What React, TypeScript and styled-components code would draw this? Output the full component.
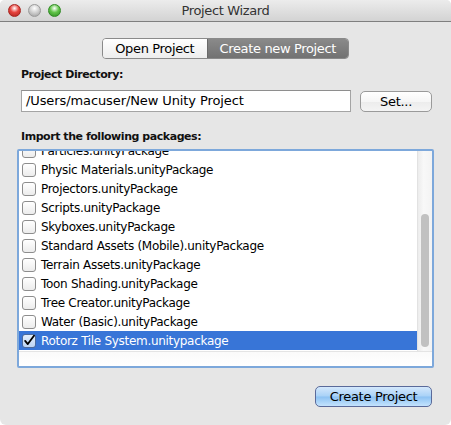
import React from "react";
import styled, { createGlobalStyle } from "styled-components";

const GlobalStyle = createGlobalStyle`
  html, body { margin: 0; padding: 0; background: #ffffff; }
  body { font-family: "DejaVu Sans", "Liberation Sans", sans-serif; }
  * { box-sizing: border-box; }
`;

const Window = styled.div`
  width: 451px;
  height: 425px;
  background: #e6e6e6;
  border-radius: 5px 5px 6px 6px;
  overflow: hidden;
  display: flex;
  flex-direction: column;
  color: #000;
`;

const TitleBar = styled.div`
  height: 22px;
  flex: none;
  display: grid;
  grid-template-columns: 70px 1fr 70px;
  align-items: center;
  background: linear-gradient(#ececec, #d3d3d3);
  border-bottom: 1px solid #7f7f7f;
`;

const Lights = styled.div`
  display: flex;
  gap: 7px;
  padding-left: 8px;
  align-items: center;
`;

const Light = styled.span<{ $c: string; $d: string }>`
  width: 13px;
  height: 13px;
  border-radius: 50%;
  background: radial-gradient(circle at 50% 30%, #ffffff 0%, ${(p) => p.$c} 45%, ${(p) => p.$d} 100%);
  border: 1px solid ${(p) => p.$d};
`;

const Title = styled.div`
  text-align: center;
  font-size: 13px;
  letter-spacing: -0.35px;
  color: #333;
  line-height: 21px;
`;

const Body = styled.div`
  flex: 1;
  display: flex;
  flex-direction: column;
  padding: 0 17px;
`;

const TabRow = styled.div`
  display: flex;
  align-items: center;
  margin: 16px -17px 0;
`;

const TabLine = styled.div`
  flex: 1;
  height: 1px;
  background: #a8a8a8;
`;

const Segmented = styled.div`
  display: flex;
  height: 21px;
  border: 1px solid #8a8a8a;
  border-radius: 4px;
  overflow: hidden;
  margin-left: 102px;
  margin-right: 102px;
`;

const Segment = styled.div<{ $active?: boolean }>`
  display: flex;
  align-items: center;
  justify-content: center;
  font-size: 13px;
  letter-spacing: -0.35px;
  width: ${(p) => (p.$active ? "142px" : "104px")};
  color: ${(p) => (p.$active ? "#ffffff" : "#000000")};
  background: ${(p) =>
    p.$active ? "linear-gradient(#8a8a8a, #727272)" : "linear-gradient(#ffffff, #ededed)"};
  border-left: ${(p) => (p.$active ? "1px solid #6a6a6a" : "none")};
`;

const Label = styled.div<{ $top: number }>`
  font-weight: bold;
  font-size: 11px;
  letter-spacing: -0.45px;
  line-height: 14px;
  margin: ${(p) => p.$top}px 0 0 4px;
  color: #111;
`;

const FieldRow = styled.div`
  display: flex;
  align-items: center;
  gap: 9px;
  margin: 8px 2px 0 4px;
`;

const TextField = styled.div`
  flex: 1;
  height: 22px;
  background: #ffffff;
  border: 1px solid #a4a4a4;
  border-top-color: #8e8e8e;
  padding-left: 4px;
  font-size: 13px;
  letter-spacing: -0.1px;
  line-height: 20px;
  color: #000;
`;

const PushButton = styled.div<{ $w: number; $primary?: boolean }>`
  width: ${(p) => p.$w}px;
  height: 21px;
  border-radius: 5px;
  border: 1px solid ${(p) => (p.$primary ? "#5a6a9a" : "#9a9a9a")};
  background: ${(p) =>
    p.$primary
      ? "linear-gradient(#d4e8fc 0%, #a9d2f7 48%, #8cc2f3 52%, #c4e3fd 100%)"
      : "linear-gradient(#ffffff 0%, #f6f6f6 50%, #ececec 52%, #f4f4f4 100%)"};
  display: flex;
  align-items: center;
  justify-content: center;
  font-size: 13px;
  letter-spacing: -0.3px;
  color: #000;
  flex: none;
`;

const ListFrame = styled.div`
  margin-top: 5px;
  height: 219px;
  border: 2px solid #7da8db;
  border-radius: 2px;
  background: #ffffff;
  display: grid;
  grid-template-columns: 1fr 15px;
  grid-template-rows: 200px 1fr;
`;

const Viewport = styled.div`
  overflow: hidden;
  position: relative;
`;

const Rows = styled.div<{ $scroll: number }>`
  margin-top: ${(p) => -p.$scroll}px;
  display: flex;
  flex-direction: column;
`;

const Row = styled.div<{ $selected?: boolean }>`
  height: 19px;
  display: flex;
  align-items: center;
  gap: 5px;
  padding-left: 3px;
  font-size: 12px;
  letter-spacing: -0.3px;
  white-space: nowrap;
  background: ${(p) => (p.$selected ? "#3875d7" : "transparent")};
  color: ${(p) => (p.$selected ? "#ffffff" : "#000000")};
`;

const Box = styled.span<{ $checked?: boolean }>`
  width: 14px;
  height: 14px;
  flex: none;
  border-radius: 3px;
  border: 1px solid ${(p) => (p.$checked ? "#4d6b9c" : "#8d8d8d")};
  background: ${(p) =>
    p.$checked ? "linear-gradient(#e3eefc, #bcd4f4)" : "linear-gradient(#ffffff, #ececec)"};
  display: flex;
  align-items: center;
  justify-content: center;
`;

const ScrollTrack = styled.div`
  background: linear-gradient(90deg, #ececec, #f8f8f8 40%, #f3f3f3);
  border-left: 1px solid #e2e2e2;
  padding: 63px 0 0 3px;
`;

const Thumb = styled.div`
  width: 8px;
  height: 133px;
  border-radius: 4px;
  background: #c1c1c1;
`;

const Footer = styled.div`
  grid-column: 1 / 3;
  border-top: 1px solid #e4e4e4;
  background: linear-gradient(#fafafa, #ffffff);
`;

const BottomBar = styled.div`
  display: flex;
  justify-content: flex-end;
  margin: 18px 2px 0 0;
`;

const Check = () => (
  <svg width="14" height="14" viewBox="0 0 14 14">
    <path d="M2.5 6.8 L5.6 10.6 L12.8 0.8" fill="none" stroke="#000" strokeWidth="2.1" strokeLinecap="round" strokeLinejoin="round" />
  </svg>
);

const packages = [
  "Particles.unityPackage",
  "Physic Materials.unityPackage",
  "Projectors.unityPackage",
  "Scripts.unityPackage",
  "Skyboxes.unityPackage",
  "Standard Assets (Mobile).unityPackage",
  "Terrain Assets.unityPackage",
  "Toon Shading.unityPackage",
  "Tree Creator.unityPackage",
  "Water (Basic).unityPackage",
];

export default function App() {
  return (
    <>
      <GlobalStyle />
      <Window>
        <TitleBar>
          <Lights>
            <Light $c="#e8453f" $d="#a8231e" />
            <Light $c="#d2d2d2" $d="#9a9a9a" />
            <Light $c="#63c54a" $d="#2e8a22" />
          </Lights>
          <Title>Project Wizard</Title>
          <div />
        </TitleBar>
        <Body>
          <TabRow>
            <TabLine />
            <Segmented>
              <Segment>Open Project</Segment>
              <Segment $active>Create new Project</Segment>
            </Segmented>
            <TabLine />
          </TabRow>
          <Label $top={9}>Project Directory:</Label>
          <FieldRow>
            <TextField>/Users/macuser/New Unity Project</TextField>
            <PushButton $w={72}>Set...</PushButton>
          </FieldRow>
          <Label $top={18}>Import the following packages:</Label>
          <ListFrame>
            <Viewport>
              <Rows $scroll={10}>
                {packages.map((p) => (
                  <Row key={p}>
                    <Box />
                    {p}
                  </Row>
                ))}
                <Row $selected>
                  <Box $checked>
                    <Check />
                  </Box>
                  Rotorz Tile System.unitypackage
                </Row>
              </Rows>
            </Viewport>
            <ScrollTrack>
              <Thumb />
            </ScrollTrack>
            <Footer />
          </ListFrame>
          <BottomBar>
            <PushButton $w={117} $primary>
              Create Project
            </PushButton>
          </BottomBar>
        </Body>
      </Window>
    </>
  );
}
